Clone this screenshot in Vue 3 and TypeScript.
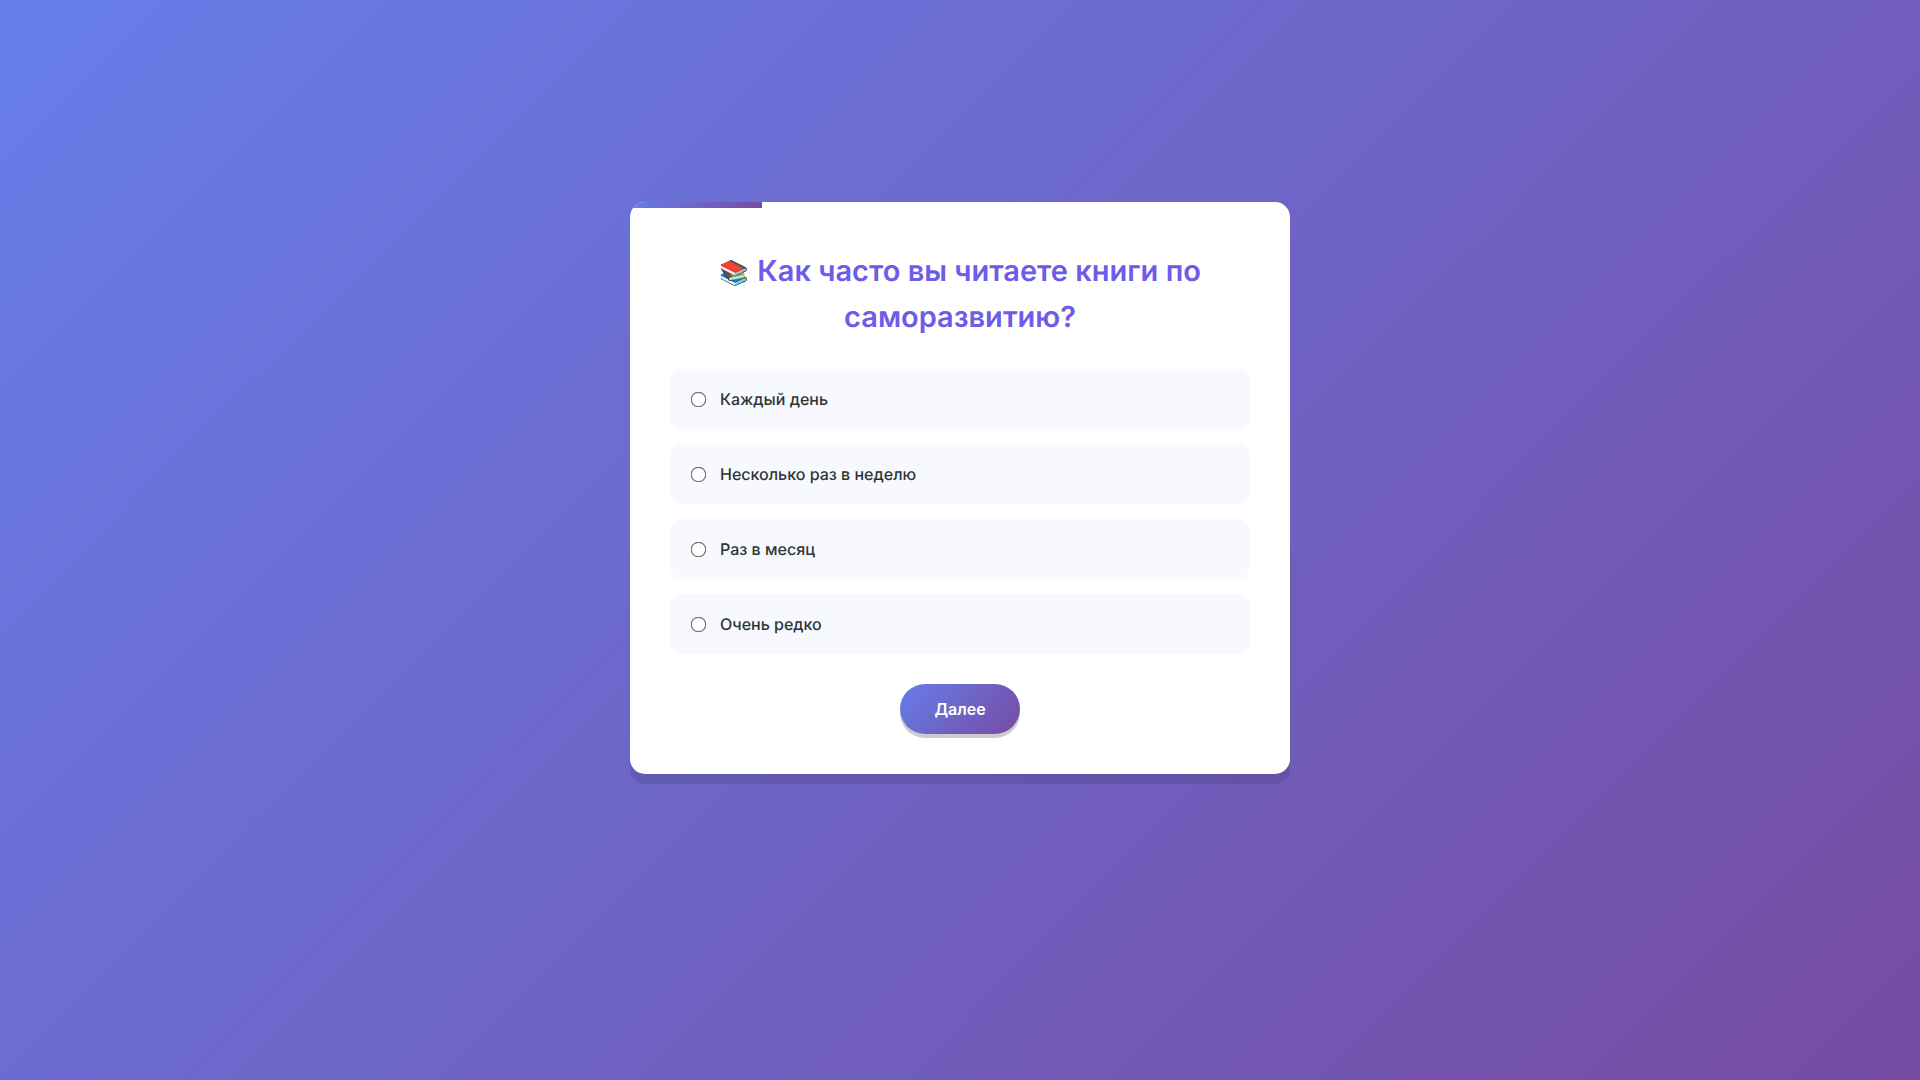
<script setup lang="ts">
import { computed, ref } from 'vue'

const title = 'Как часто вы читаете книги по саморазвитию?'
const answers: string[] = ['Каждый день', 'Несколько раз в неделю', 'Раз в месяц', 'Очень редко']

const step = ref(1)
const totalSteps = 5
const selected = ref<string | null>(null)
const progress = computed(() => `${(step.value / totalSteps) * 100}%`)
</script>

<template>
  <main class="page">
    <form class="card" @submit.prevent>
      <div class="progress" :style="{ width: progress }"></div>
      <h1 class="title" id="question"><span class="emoji">📚</span> {{ title }}</h1>
      <div class="options" role="radiogroup" aria-labelledby="question">
        <label v-for="answer in answers" :key="answer" class="option">
          <input v-model="selected" class="radio" type="radio" name="answer" :value="answer" />
          <span>{{ answer }}</span>
        </label>
      </div>
      <button class="next" type="submit">Далее</button>
    </form>
  </main>
</template>

<style>
body {
  margin: 0;
}
</style>

<style scoped>
.page {
  box-sizing: border-box;
  min-height: 100vh;
  padding: 20px 20px 124px;
  display: flex;
  justify-content: center;
  align-items: center;
  background: linear-gradient(135deg, #667eea 0%, #764ba2 100%);
  color: #2d3436;
  font-family: Inter, "Liberation Sans", sans-serif;
  font-size: 16px;
  line-height: 26px;
  text-rendering: geometricPrecision;
}

.card {
  position: relative;
  box-sizing: border-box;
  width: 100%;
  max-width: 660px;
  padding: 46px 40px 40px;
  display: flex;
  flex-direction: column;
  align-items: center;
  overflow: hidden;
  border-radius: 15px;
  background: #fff;
  box-shadow: 0 10px 0 rgba(0, 0, 0, 0.1);
}

.progress {
  position: absolute;
  top: 0;
  left: 0;
  height: 6px;
  background: linear-gradient(135deg, #667eea 0%, #764ba2 100%);
}

.title {
  margin: 0 0 29px;
  color: #6c5ce7;
  font-size: 29px;
  font-weight: 600;
  line-height: 46px;
  text-align: center;
}

.emoji {
  margin-right: 1px;
  font-size: 24px;
  line-height: 24px;
}

.options {
  width: 100%;
  margin-bottom: 30px;
  display: flex;
  flex-direction: column;
  gap: 15px;
}

.option {
  display: flex;
  align-items: center;
  gap: 15px;
  padding: 17px 22px;
  border-radius: 12px;
  background: #f8f9ff;
  font-weight: 500;
  cursor: pointer;
}

.radio {
  margin: 0;
  transform: scale(1.2);
}

.next {
  min-width: 120px;
  height: 50px;
  padding: 0 34px;
  border: 0;
  border-radius: 25px;
  background: linear-gradient(135deg, #667eea 0%, #764ba2 100%);
  box-shadow: 0 4px 0 rgba(0, 0, 0, 0.2);
  color: #fff;
  font: inherit;
  font-weight: 600;
  cursor: pointer;
}
</style>
